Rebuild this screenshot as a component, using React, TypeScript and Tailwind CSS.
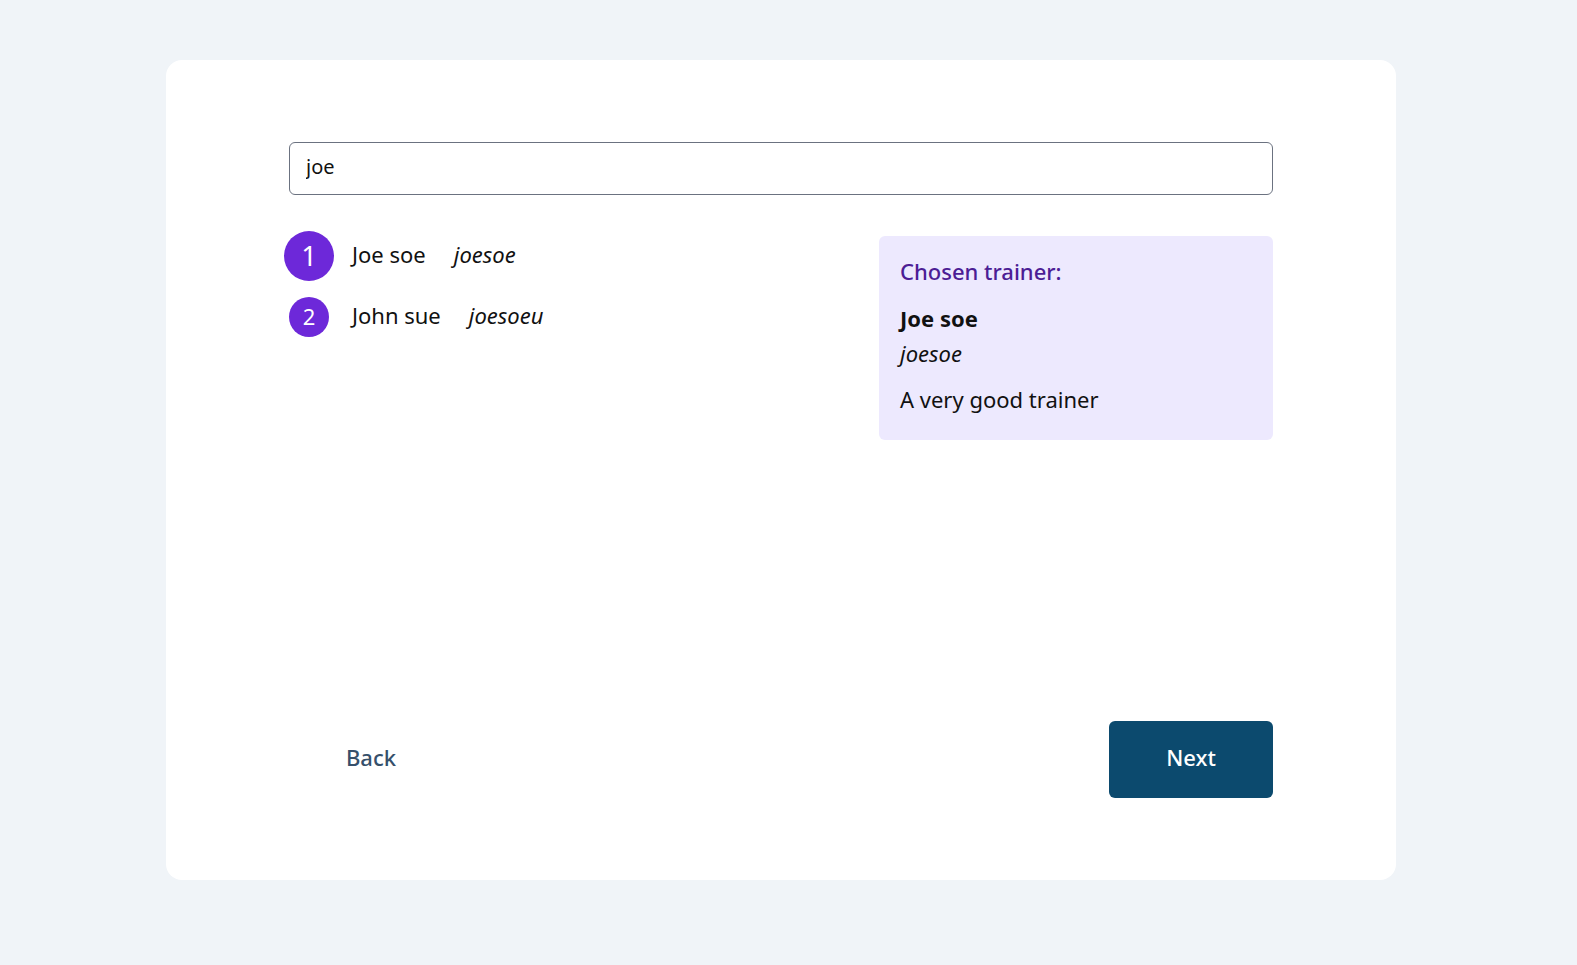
import React from "react";

const trainers = [
  { id: 1, name: "Joe soe", username: "joesoe", selected: true },
  { id: 2, name: "John sue", username: "joesoeu", selected: false },
];

export default function App() {
  return (
    <div
      className="min-h-[965px] bg-[#f0f4f8] pl-[166px] pt-[60px] text-[22px] text-[#111111]"
      style={{ fontFamily: '"Noto Sans", "Open Sans", sans-serif' }}
    >
      <div className="flex h-[820px] w-[1230px] flex-col rounded-2xl bg-white px-[123px] pb-[82px] pt-[82px]">
        <input
          readOnly
          value="joe"
          className="h-[53px] w-full rounded-md border border-[#6b7280] px-4 pb-[5px] text-[20px] text-[#111] outline-none"
        />
        <div className="mt-[41px] flex items-start">
          <ul className="flex flex-1 flex-col gap-[21px]">
            {trainers.map((t) => (
              <li key={t.id} className="flex h-[40px] items-center">
                <span
                  className={
                    t.selected
                      ? "flex h-10 w-10 scale-125 items-center justify-center rounded-full bg-[#6d28d9] pb-[2px] text-[22px] text-white"
                      : "flex h-10 w-10 items-center justify-center rounded-full bg-[#6d28d9] pb-[2px] text-[22px] text-white"
                  }
                >
                  {t.id}
                </span>
                <span className="ml-[23px] pb-[3px]">{t.name}</span>
                <span className="ml-[28px] pb-[3px] italic">{t.username}</span>
              </li>
            ))}
          </ul>
          <div className="w-[394px] rounded-md bg-[#ede9fe] px-[21px] pb-[27px] pt-[21px]">
            <div className="font-medium leading-7 text-[#4c1d95]">Chosen trainer:</div>
            <div className="mt-[19px] font-bold leading-7">Joe soe</div>
            <div className="mt-[7px] italic leading-7">joesoe</div>
            <div className="mt-[18px] leading-7">A very good trainer</div>
          </div>
        </div>
        <div className="mt-auto flex items-center justify-between">
          <button className="h-[77px] w-[164px] rounded-md pb-[4px] text-[22px] font-medium text-[#36506b]">
            Back
          </button>
          <button className="h-[77px] w-[164px] rounded-md bg-[#0c4a6e] pb-[4px] text-[22px] font-medium text-white">
            Next
          </button>
        </div>
      </div>
    </div>
  );
}
